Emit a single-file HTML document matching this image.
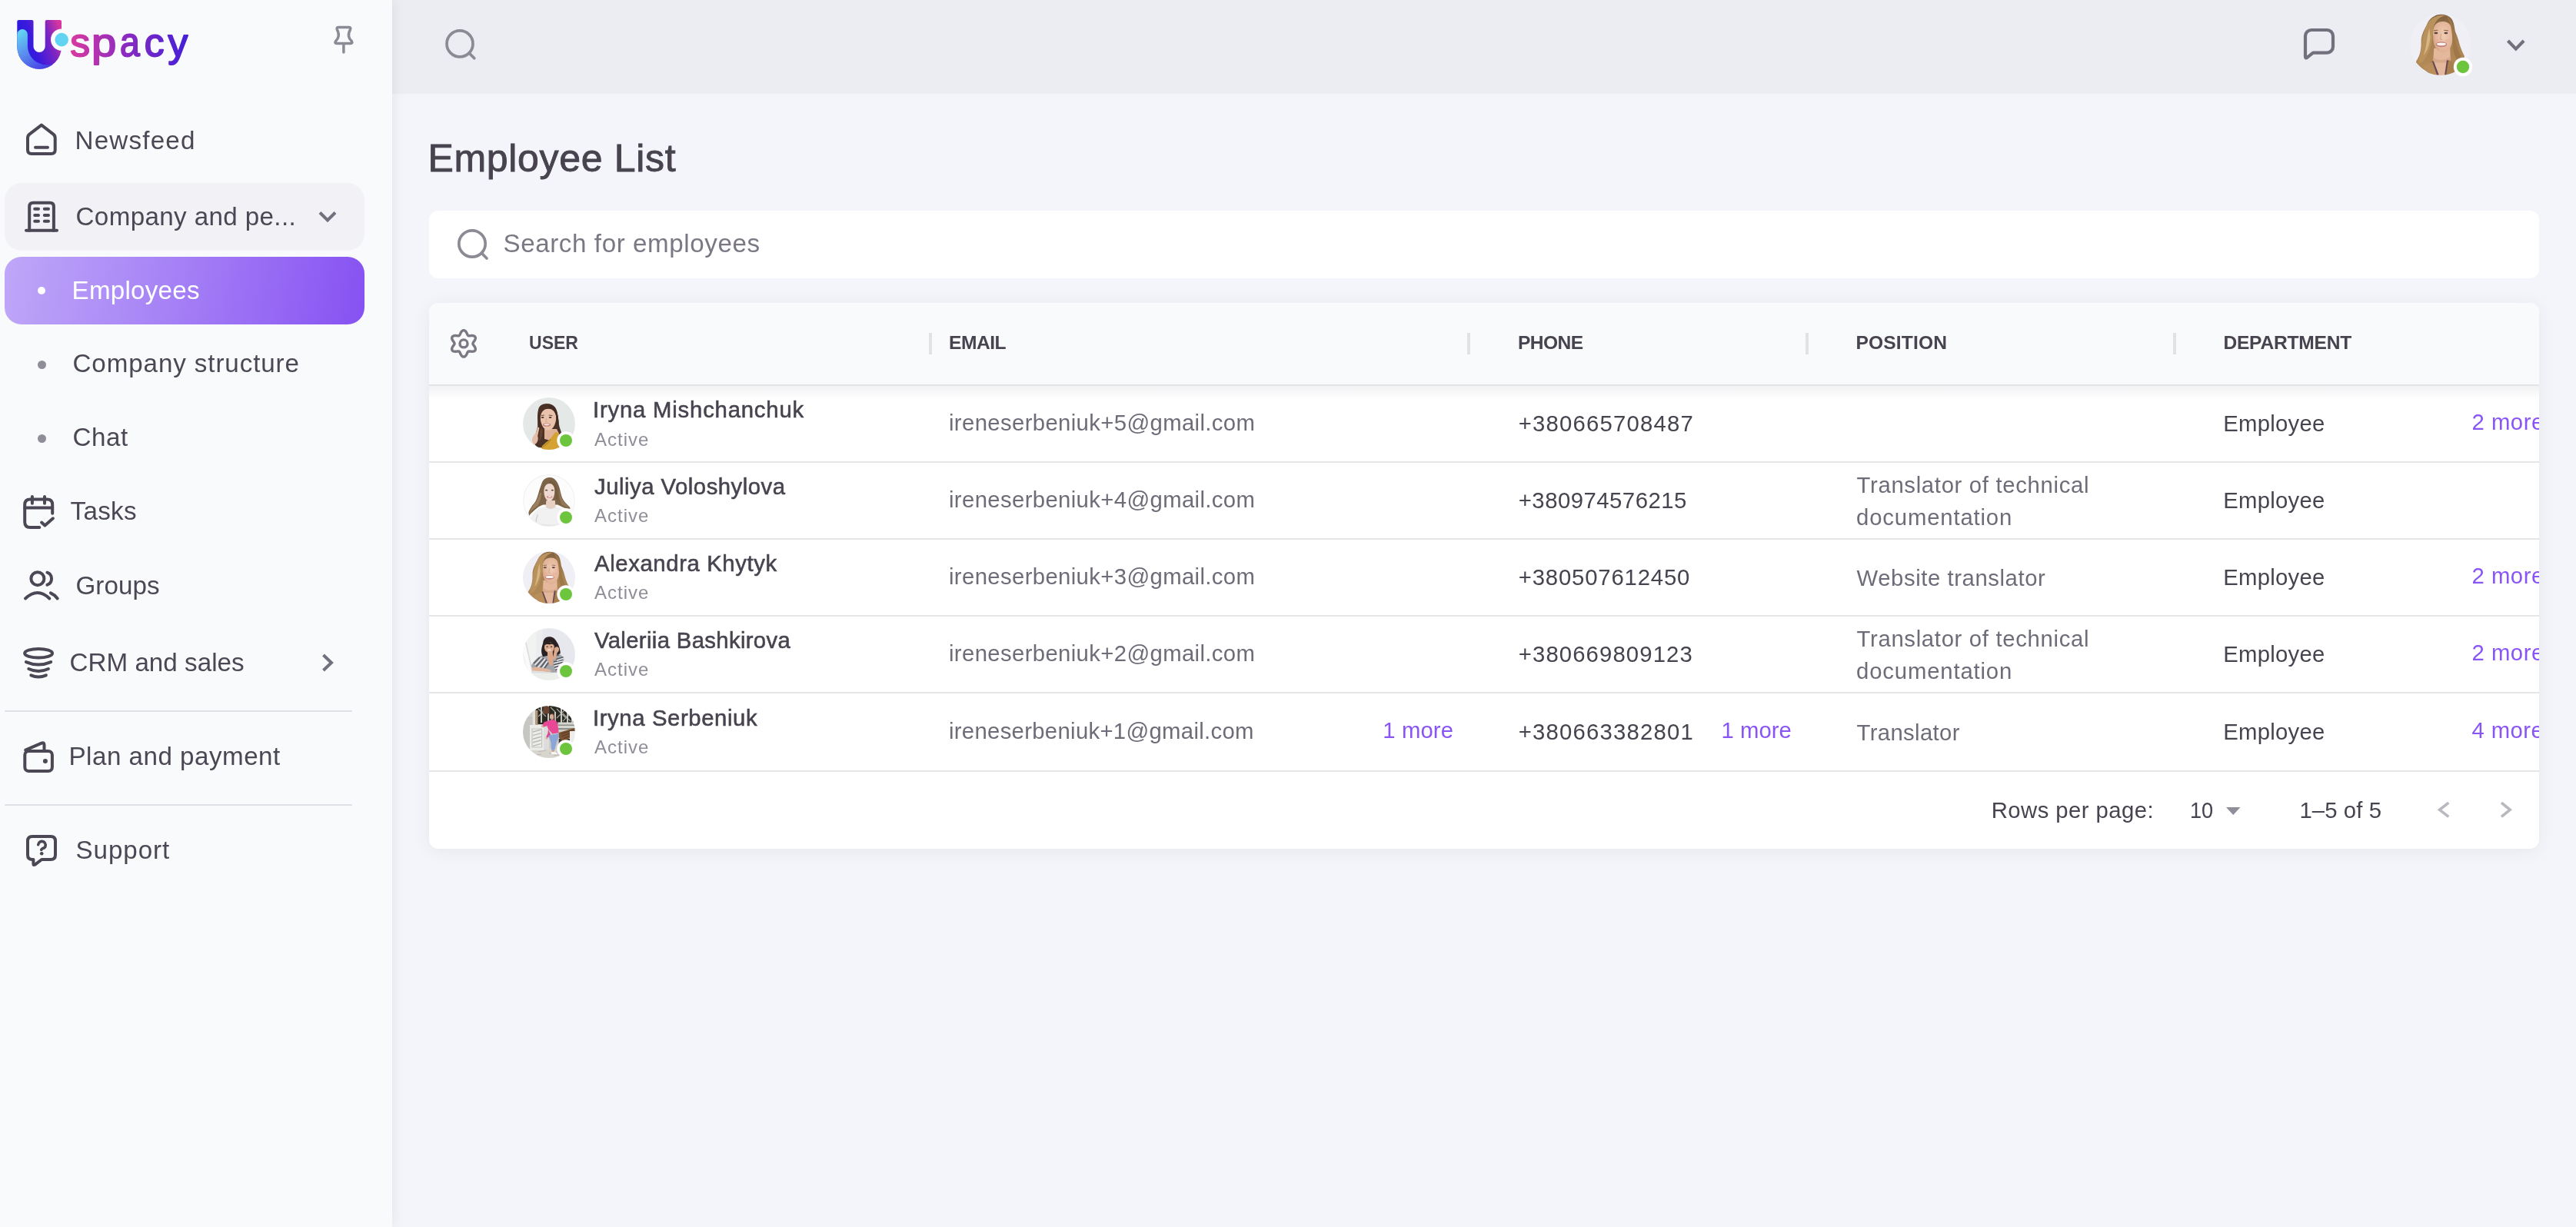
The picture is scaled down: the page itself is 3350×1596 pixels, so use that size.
<!DOCTYPE html><html><head><meta charset="utf-8"><title>Employee List</title><style>
html,body{margin:0;padding:0}
body{width:3350px;height:1596px;position:relative;overflow:hidden;background:#f4f5fa;font-family:"Liberation Sans",sans-serif}
.a{position:absolute}
.t{position:absolute;white-space:pre;line-height:1}
#pg{position:absolute;left:0;top:0;width:3350px;height:1596px;will-change:transform;transform:translateZ(0)}
#side{left:0;top:0;width:510px;height:1596px;background:#f9fafc;box-shadow:3px 0 14px rgba(70,70,100,.075)}
#top{left:510px;top:0;width:2840px;height:122px;background:#ecedf2}
#grp{left:6px;top:238px;width:468px;height:88px;border-radius:22px;background:#f1f1f6}
#pill{left:6px;top:334px;width:468px;height:88px;border-radius:22px;background:linear-gradient(100deg,#bfa7f8 0%,#a987f6 40%,#9668f4 75%,#8651f2 100%)}
.dot{width:11px;height:11px;border-radius:50%;background:#8f8d97}
.hr{left:6px;width:452px;height:2px;background:#e0e0e6}
#sbox{left:558px;top:274px;width:2744px;height:88px;border-radius:12px;background:#fff}
#card{left:558px;top:394px;width:2744px;height:710px;border-radius:12px;background:#fff;overflow:hidden;box-shadow:0 3px 22px rgba(50,50,90,.07)}
#head{left:0;top:0;width:2744px;height:106px;background:#f9fafc}
#hline{left:0;top:106px;width:2744px;height:2px;background:#e4e4e6}
#hsh{left:0;top:108px;width:2744px;height:18px;background:linear-gradient(#f2f2f4,#fff)}
.rl{left:0;width:2744px;height:2px;background:#e6e6e9}
.cs{top:39px;width:4px;height:28px;background:#e1e1e6}
#clip{left:0;top:0;width:3302px;height:1596px;overflow:hidden}
</style></head><body><div id="pg">
<div class="a" id="top"></div>
<div class="a" id="sbox"></div>
<div class="a" id="card"><div class="a" id="head"></div><div class="a" id="hsh"></div><div class="a" id="hline"></div><div class="a rl" style="top:206px"></div><div class="a rl" style="top:306px"></div><div class="a rl" style="top:406px"></div><div class="a rl" style="top:506px"></div><div class="a rl" style="top:608px"></div><div class="a cs" style="left:650px"></div><div class="a cs" style="left:1350px"></div><div class="a cs" style="left:1790px"></div><div class="a cs" style="left:2268px"></div></div>
<div class="a" id="side"></div>
<div class="a" id="grp"></div><div class="a" id="pill"></div>
<div class="a dot" style="left:49px;top:373px;width:10px;height:10px;background:#fff"></div>
<div class="a dot" style="left:48.5px;top:468.5px"></div><div class="a dot" style="left:48.5px;top:564.5px"></div>
<div class="a hr" style="top:924px"></div><div class="a hr" style="top:1046px"></div>
<svg class="a" style="left:0;top:0" width="3350" height="1596" viewBox="0 0 3350 1596">

<defs>
<linearGradient id="lgU" x1="22" y1="60" x2="80" y2="40" gradientUnits="userSpaceOnUse"><stop offset="0" stop-color="#2418e4"/><stop offset=".35" stop-color="#3a1bdc"/><stop offset=".7" stop-color="#7a24c4"/><stop offset="1" stop-color="#d8369e"/></linearGradient>
<linearGradient id="lgR" x1="28" y1="40" x2="62" y2="90" gradientUnits="userSpaceOnUse"><stop offset="0" stop-color="#62d4f2"/><stop offset=".45" stop-color="#5b8cee"/><stop offset="1" stop-color="#4338e6"/></linearGradient>
<linearGradient id="lgT" x1="92" y1="0" x2="246" y2="0" gradientUnits="userSpaceOnUse"><stop offset="0" stop-color="#d93aa0"/><stop offset=".45" stop-color="#8c2bc0"/><stop offset="1" stop-color="#431fd8"/></linearGradient>
<linearGradient id="lgP"><stop offset="0" stop-color="#b934ad"/><stop offset="1" stop-color="#982dbb"/></linearGradient><linearGradient id="lgA"><stop offset="0" stop-color="#912cbe"/><stop offset="1" stop-color="#7a28c6"/></linearGradient>
<clipPath id="cpU"><path d="M22.3,28 Q22.3,26 24.3,26 H41.5 Q43.5,26 43.5,28 V60.4 A7.6,7.6 0 0 0 58.7,60.4 V28 Q58.7,26 60.7,26 H78 Q80,26 80,28 V60.85 A28.85,28.85 0 0 1 22.3,60.85 Z"/></clipPath>
</defs>
<g clip-path="url(#cpU)">
<rect x="20" y="24" width="62" height="68" fill="url(#lgU)"/>
<path d="M22.3,44.8 A6.8,6.8 0 0 1 35.9,44.8 V59.5 A25.2,25.2 0 0 0 75,80.4 L80,95 H15 V44.8 Z" fill="url(#lgR)"/>
</g>
<circle cx="80.2" cy="51.6" r="14.2" fill="#f9fafc"/>
<circle cx="80.2" cy="51.6" r="8.8" fill="#60d4f1"/>
<g font-family="Liberation Sans" font-weight="400" font-size="51.5" fill="url(#lgT)" stroke="url(#lgT)" stroke-width="1.9" stroke-linejoin="round"><text x="91.2" y="73.2">s</text><text transform="translate(118.95,73.2) scale(1.127,1)" fill="url(#lgP)" stroke="url(#lgP)">p</text><text transform="translate(156.1,73.2) scale(0.9,1)" fill="url(#lgA)" stroke="url(#lgA)">a</text><text x="187.8" y="73.2">c</text><text x="218.6" y="73.2">y</text></g>

<g fill="none" stroke="#4b4754" stroke-width="4" stroke-linecap="round" stroke-linejoin="round"><path d="M53.9,162.6 L38.3,174.6 Q36,176.4 36,179.4 V194.9 Q36,199.9 41,199.9 H66.7 Q71.7,199.9 71.7,194.9 V179.4 Q71.7,176.4 69.4,174.6 Z"/><path d="M46,191.8 H62"/><path d="M38.2,299.8 V268.8 Q38.2,263.8 43.2,263.8 H64.9 Q69.9,263.8 69.9,268.8 V299.8"/><path d="M34,299.8 H74"/><path d="M45.2,271.8 H50 M57.8,271.8 H63"/><path d="M45.2,279.9 H50 M57.8,279.9 H63"/><path d="M45.2,287.7 H50 M57.8,287.7 H63"/><path d="M51.3,686 H39.2 Q32.2,686 32.2,679 V656.6 Q32.2,649.6 39.2,649.6 H61.2 Q68.2,649.6 68.2,656.6 V667.8"/><path d="M32.2,660.6 H68.2 M41.9,646 V654.8 M58,646 V654.8 M54.1,679.5 L58.4,683.4 L68.9,674.3"/><circle cx="48.9" cy="752.7" r="8.5"/><path d="M61.4,744.7 A8.5,8.5 0 0 1 61.4,760.7 M33,778.5 Q48.9,763.5 64.3,778.5 M65.9,771.4 Q71,773.6 74.7,778.5"/><ellipse cx="50.1" cy="849.8" rx="18" ry="5.8"/><path d="M33.9,861.1 Q50,868 66.2,861.1 M37.3,870 Q50,876 62.9,870 M40.3,878.4 Q50,882.6 59.9,878.4"/><rect x="32.3" y="977" width="35.6" height="26" rx="5"/><path d="M33.2,975.6 L54,966.6 Q57.5,965.2 57.5,969 V977"/><path d="M43.4,1118 H42 Q36,1118 36,1112 V1094 Q36,1088 42,1088 H66 Q72,1088 72,1094 V1112 Q72,1118 66,1118 H54.2 L45.6,1124.6 Q43.4,1126 43.4,1123.4 Z"/></g><circle cx="58.9" cy="990" r="3" fill="#4b4754"/><path d="M49.7,1098.6 A4.8,4.8 0 1 1 57.6,1102.8 Q54.2,1104 53.7,1105.4" fill="none" stroke="#4b4754" stroke-width="3.6" stroke-linecap="round"/><circle cx="54.2" cy="1110.3" r="2.3" fill="#4b4754"/><g fill="none" stroke="#73707d" stroke-width="4" stroke-linecap="butt" stroke-linejoin="miter"><path d="M416,276.5 L426,286.5 L436,276.5"/><path d="M420.5,852 L431,862 L420.5,872"/></g><path d="M440.5,35.5 H453.7 Q456.6,35.5 455.6,38.2 Q453,43 453.5,47 Q454,50.5 457.2,53.4 Q459,56.4 456,56.4 H437.8 Q434.8,56.4 436.6,53.4 Q439.6,50.5 440.2,47 Q440.8,43 438.3,38.2 Q437.4,35.5 440.5,35.5 Z M446.9,56.4 V68" fill="none" stroke="#8c8a94" stroke-width="3.5" stroke-linecap="round" stroke-linejoin="round"/>
<g fill="none" stroke="#8c8a94" stroke-width="3.7" stroke-linecap="round"><circle cx="598" cy="56.9" r="17"/><path d="M610.2,69.1 L616.8,75.7"/><circle cx="614" cy="317" r="17.2"/><path d="M626.3,329.3 L633,336"/></g><path d="M3008,68.7 L3000.6,74.6 Q2998,76.6 2998,73.4 V47 a8,8 0 0 1 8,-8 H3026 a8,8 0 0 1 8,8 V60.7 a8,8 0 0 1 -8,8 Z" fill="none" stroke="#73707d" stroke-width="4.2" stroke-linejoin="round"/><path d="M3261.5,53 L3271.8,63.6 L3282.1,53" fill="none" stroke="#73707d" stroke-width="4.2"/><path d="M614.90,446.90 L615.10,446.05 L615.67,445.12 L616.46,444.04 L617.31,442.80 L617.99,441.44 L618.33,440.07 L618.22,438.81 L617.62,437.76 L616.58,437.03 L615.22,436.65 L613.71,436.56 L612.21,436.67 L610.88,436.82 L609.78,436.84 L608.95,436.59 L608.32,435.99 L607.79,435.04 L607.25,433.81 L606.60,432.46 L605.77,431.19 L604.75,430.21 L603.60,429.67 L602.40,429.67 L601.25,430.21 L600.23,431.19 L599.40,432.46 L598.75,433.81 L598.21,435.04 L597.68,435.99 L597.05,436.59 L596.22,436.84 L595.12,436.82 L593.79,436.67 L592.29,436.56 L590.78,436.65 L589.42,437.03 L588.38,437.76 L587.78,438.81 L587.67,440.07 L588.01,441.44 L588.69,442.80 L589.54,444.04 L590.33,445.12 L590.90,446.05 L591.10,446.90 L590.90,447.75 L590.33,448.68 L589.54,449.76 L588.69,451.00 L588.01,452.36 L587.67,453.73 L587.78,454.99 L588.38,456.04 L589.42,456.77 L590.78,457.15 L592.29,457.24 L593.79,457.13 L595.12,456.98 L596.22,456.96 L597.05,457.21 L597.68,457.81 L598.21,458.76 L598.75,459.99 L599.40,461.34 L600.23,462.61 L601.25,463.59 L602.40,464.13 L603.60,464.13 L604.75,463.59 L605.77,462.61 L606.60,461.34 L607.25,459.99 L607.79,458.76 L608.32,457.81 L608.95,457.21 L609.78,456.96 L610.88,456.98 L612.21,457.13 L613.71,457.24 L615.22,457.15 L616.58,456.77 L617.62,456.04 L618.22,454.99 L618.33,453.73 L617.99,452.36 L617.31,451.00 L616.46,449.76 L615.67,448.68 L615.10,447.75Z" fill="none" stroke="#7b7884" stroke-width="3.4" stroke-linejoin="round"/><circle cx="603" cy="446.9" r="5" fill="none" stroke="#7b7884" stroke-width="3.4"/><path d="M2895,1050 H2913.5 L2904.25,1060 Z" fill="#8f8d97"/><g fill="none" stroke="#b9b8bf" stroke-width="3.6"><path d="M3184.3,1044.2 L3172.6,1053.3 L3184.3,1062.4"/><path d="M3253,1044.2 L3264.2,1053.3 L3253,1062.4"/></g>
<filter id="avb" x="-5%" y="-5%" width="110%" height="110%"><feGaussianBlur stdDeviation="0.5"/></filter><clipPath id="avc1"><circle cx="34" cy="34" r="34"/></clipPath><g transform="translate(680,517) scale(1.0000)"><g clip-path="url(#avc1)"><g filter="url(#avb)">
<rect width="68" height="68" fill="#e4e9e8"/>
<path d="M30.9,7.9 C24,8 20.5,12 20,16.1 C19,20 19,24 19,26.4 C19.3,31 19.6,34 19.3,36.6 C18.6,41 17.4,44 16.6,46.9 C15.5,51 14.6,54 14.5,57.2 C15,61 17,63.5 19.3,64.7 L30,66 L36,52 L50.1,46.9 C49.8,45.6 49.6,44.6 49.4,43.5 C48,40 47,36 46.7,33.2 C46.4,29 46,26 45.3,22.9 C44.6,18 43.6,15 41.9,12.7 C39.5,9.4 35.5,7.8 30.9,7.9 Z" fill="#4c3026"/>
<path d="M23,40 C22,46 21,52 21.5,58 C24,54 26,48 26,42 Z" fill="#65432f"/>
<path d="M28,41 L44,41 L47,47 L36,56 L28,54 Z" fill="#dfb196"/>
<path d="M22.8,27 C22.6,19.5 26.5,14.7 33,14.7 C39.5,14.7 43.4,19.5 43.2,27 C43,35 38.5,42.8 33,42.8 C27.5,42.8 23,35 22.8,27 Z" fill="#e9c2ab"/>
<path d="M33.2,14 C29,14 24.5,17 22.8,24 C22,28 22.6,32 22,36 L19.4,36 C19.6,28 19.4,22 21.5,16.5 C24,11.5 29,9.6 33.2,11 Z" fill="#4c3026"/>
<path d="M33.2,14 C37,14 41,17 43,23 C43.6,27 43.4,31 44.2,35 L46.6,33.2 C46,26 45.4,20 43,15.5 C40.5,11.5 36.5,9.8 33.2,11 Z" fill="#432a21"/>
<path d="M42.6,44.8 L46.7,46.9 C48,52 47.8,58 47.4,64.7 L40,68 L24.8,68 L24.8,63.3 C28,60 32,57 35.7,53.7 C38,50.6 40.4,47.6 42.6,44.8 Z" fill="#d4a233"/>
<path d="M35.7,53.7 C33,57 29,61 24.8,64.5 L24.8,66 C30,63 34,59 37,54.5 Z" fill="#b98a25"/>
<path d="M19.4,38.4 C20.6,38.3 21.4,39.2 21.2,40.6 L19.2,50 C19.8,52 20,54 19.4,56 C18.6,59 16.6,61 14,61.2 C12,58 11.6,55 12.4,52.6 C13.4,50 15.4,48 16.8,46 Z" fill="#e5bda8"/>
<ellipse cx="31" cy="35.6" rx="5" ry="2.2" fill="#c27a72"/><ellipse cx="31" cy="35.3" rx="3.6" ry="1.1" fill="#f6ebe6"/>
<ellipse cx="25.6" cy="26" rx="1.9" ry="1" fill="#4a3329"/><ellipse cx="35.6" cy="26" rx="1.9" ry="1" fill="#4a3329"/>
<path d="M23.6,23.6 L27.8,23 M33.6,23 L38.4,23.6" stroke="#5b3d30" stroke-width=".9" fill="none"/>
<path d="M30.6,27 L29.8,31.4 L31.6,31.6" stroke="#d4a48c" stroke-width=".9" fill="none"/>
</g></g></g><circle cx="736.0" cy="573.0" r="11.7" fill="#fff"/><circle cx="736.0" cy="573.0" r="8" fill="#6cc53c"/><clipPath id="avc2"><circle cx="34" cy="34" r="34"/></clipPath><g transform="translate(680,617) scale(1.0000)"><g clip-path="url(#avc2)"><g filter="url(#avb)">
<rect width="68" height="68" fill="#fcfcfc"/>
<path d="M34.4,4.1 C29,4.2 25.6,8 24.1,12.7 C22.6,17 21.4,20 20.7,22.9 C19.6,27 18.6,30 17.3,33.2 C15.8,36.4 14.2,38.4 12.5,40 C10.6,43 9,45.6 7.7,48.3 C7.2,50.4 7.6,52.4 8.4,53.7 C9.6,51.6 11,50.2 12.5,49 C15.4,46.4 18,44.2 20.7,42.1 L26.2,39.4 L45.3,39.4 C48,40.6 50.6,42 53.5,43.5 C56.4,44.4 59.2,44.8 61.8,44.8 C61.4,43.6 61,42.8 60.4,42.1 C58.4,40.2 56.6,38.4 54.9,36.6 C53.2,34.4 51.8,32 50.8,29.8 C49.8,26.4 48.8,23 48.1,19.5 C47.2,15.6 45.8,12 43.9,9.2 C41.6,5.8 38.4,4 34.4,4.1 Z" fill="#7d6446"/>
<path d="M22,24 C20.6,30 17.6,36 13,41 C11,44 9.4,47 8.6,50.6 C11.4,46.6 15.4,43.6 19.6,40.4 C22.4,35.6 23.6,30 24.4,24 Z" fill="#9a8060"/>
<path d="M47.4,22 C48.4,28 51,33.6 55,37.6 C56.8,39.6 58.6,41.4 60.2,43 C56.6,42.6 53.4,41.4 50.4,39.4 C48.4,34 47.2,28 46.4,22 Z" fill="#927858"/>
<path d="M15.2,49 C19,45.4 24,43 30.3,42.1 L41.9,42.1 C46,42.6 49.6,43.6 52.2,44.8 C57,48 60,54 62,68 L6,68 C8,60 11,53.6 15.2,49 Z" fill="#f1f1f1"/>
<path d="M30.3,34 L41.9,34 L42.4,42.4 C39,45 33.4,45 29.8,42.4 Z" fill="#e8cfc3"/>
<path d="M30,42.2 C33.6,45.2 38.6,45.2 42.2,42.2" stroke="#d6d6d6" stroke-width="1" fill="none"/>
<path d="M27.4,23 C27.2,16 30,12 34.5,12 C39,12 41.6,16 41.3,23 C41,29.6 38.4,34.7 34.5,34.7 C30.6,34.7 27.6,29.6 27.4,23 Z" fill="#efd9cf"/>
<path d="M34.6,11.2 C30,11.2 27.4,15 26.8,21 C26.4,25 26.6,29 25.6,33 L23,33 C24,27 24.4,21 25.6,15.6 C27.4,9.8 31,7.6 34.6,8 Z" fill="#7d6446"/>
<path d="M34.6,11.2 C39,11.2 41.4,15 41.8,21 C42,25 42,29 43.4,33 L46.4,33 C45.2,27 44.6,21 43.4,15.6 C41.6,9.8 38,7.6 34.6,8 Z" fill="#745c40"/>
<path d="M19.3,52.4 C17.6,56 17,60 17.3,63.3" stroke="#cfcfcf" stroke-width="1.3" fill="none"/>
<path d="M22,65.4 C32,67.4 42,67.2 50,64.8" stroke="#e0e0e0" stroke-width="2.2" fill="none"/>
<ellipse cx="34.7" cy="29.2" rx="3.6" ry="1.5" fill="#d08a86"/><ellipse cx="34.9" cy="29" rx="2.4" ry=".8" fill="#fff"/>
<ellipse cx="30.6" cy="20.6" rx="1.7" ry=".9" fill="#5a4a44"/><ellipse cx="38.4" cy="20.6" rx="1.7" ry=".9" fill="#5a4a44"/>
<circle cx="34" cy="34" r="33.4" fill="none" stroke="#f0f0f0" stroke-width="1.2"/>
</g></g></g><circle cx="736.0" cy="673.0" r="11.7" fill="#fff"/><circle cx="736.0" cy="673.0" r="8" fill="#6cc53c"/><clipPath id="avc3"><circle cx="34" cy="34" r="34"/></clipPath><g transform="translate(680,717) scale(1.0000)"><g clip-path="url(#avc3)"><g filter="url(#avb)">
<defs><linearGradient id="h3_3" x1="0" y1="0" x2="0" y2="1"><stop offset="0" stop-color="#7f6040"/><stop offset=".45" stop-color="#a98252"/><stop offset="1" stop-color="#b48c58"/></linearGradient>
<radialGradient id="f3_3" cx=".55" cy=".45" r=".6"><stop offset="0" stop-color="#f0cbb4"/><stop offset="1" stop-color="#dfae90"/></radialGradient></defs>
<rect width="68" height="68" fill="#efeff5"/>
<path d="M34.6,0.7 C27,0.5 21,6 18.7,12.1 C15,19 12.5,24 12.5,30 C12.5,38 12,44 8.3,50.2 C7,52 6.5,53 6.9,53.7 C12,60 20,66 30,68 L52,68 C53,64 52,62 51.3,60.6 C56,58 60,52 60.3,46.8 C58,42 56,38 54.7,32.9 C53,26 51,22 49.9,19 C49,12 48,8 45.7,5.2 C43,2 39,0.7 34.6,0.7 Z" fill="url(#h3_3)"/>
<path d="M26.6,38 L44.4,38 L45,54 L41.6,52.3 L40.4,68 L29.6,68 L25.6,53.7 Z" fill="#e4b89c"/>
<path d="M26,48 C30,52 40,52 44.6,47 L45,54 L26,54 Z" fill="#d9a98c"/>
<path d="M24.6,52.6 L30.4,68 M42.4,51.4 L40,68" stroke="#6a4954" stroke-width="3.4" fill="none"/>
<path d="M14,58 C18,56 22,54 24.6,52.6 L30,68 L22,68 Z" fill="#b98e5a"/>
<path d="M42.6,51.2 C46,52 50,55 51.3,60.6 L52,68 L40,68 Z" fill="#a9804e"/>
<path d="M25.6,22 C25.3,12 30,8.5 36.5,8.5 C43,8.5 47.3,13 47,22 C47.4,30 46.6,36.4 42,40.8 C38.6,43.6 34.6,43.6 31.4,40.8 C26.6,36.4 25.4,30 25.6,22 Z" fill="url(#f3_3)"/>
<path d="M40,2 C32,3 26.4,9 25.6,19 C25,28 24,36 20,44 C17,50 14,54 10,55 C9,50 12,44 13,38 C13,28 15,18 20,10 C24,4 32,0 40,2 Z" fill="#b9915c"/>
<path d="M21.6,16 C18,26 19,36 15,46 C19,42 22,34 22.6,26 Z" fill="#d6b680"/>
<path d="M40,2 C45,5 48,10 48,20 C49,28 52,36 55,44 C57,48 58,52 56,56 C52,52 49,46 47.5,38 C47,30 47,24 46,18 C45,12 43,6 40,2 Z" fill="#9e7848"/>
<path d="M26.4,24 C26.6,31 28.4,36.6 31.6,40.4" stroke="#d4a283" stroke-width="1.8" fill="none" opacity=".6"/><ellipse cx="29.4" cy="29.6" rx="2.6" ry="1.8" fill="#e8a998" opacity=".45"/><ellipse cx="41.4" cy="29.6" rx="2.6" ry="1.8" fill="#e8a998" opacity=".45"/>
<ellipse cx="34.8" cy="33.8" rx="6.2" ry="2.9" fill="#c4807a"/><ellipse cx="34.8" cy="33.4" rx="5.2" ry="1.6" fill="#faf3ef"/>
<ellipse cx="28.8" cy="21.3" rx="2.1" ry="1.05" fill="#57463f"/><ellipse cx="39.8" cy="21.3" rx="2.1" ry="1.05" fill="#57463f"/>
<path d="M26.4,18.6 L31,18 M37.6,18 L42.4,18.6" stroke="#8a6a4c" stroke-width=".9" fill="none"/>
<path d="M34.6,22 L33.6,28 L35.8,28.4" stroke="#d2a286" stroke-width=".9" fill="none"/>
</g></g></g><circle cx="736.0" cy="773.0" r="11.7" fill="#fff"/><circle cx="736.0" cy="773.0" r="8" fill="#6cc53c"/><clipPath id="avc4"><circle cx="34" cy="34" r="34"/></clipPath><g transform="translate(680,817) scale(1.0000)"><g clip-path="url(#avc4)"><g filter="url(#avb)">
<rect width="68" height="68" fill="#e6e8ee"/>
<path d="M0,0 H19 L17.3,58 H0 Z" fill="#f1f3f1"/>
<path d="M17.3,0 H26 L24,40 L17.3,58 Z" fill="#ecedf0"/>
<path d="M2.9,18.1 L11.8,57.8 L8,60 L0,30 Z" fill="#fafafa"/>
<path d="M2.9,18.1 L4.4,17.6 L13.2,57 L11.8,57.8 Z" fill="#d8dcdc"/>
<path d="M0,58.5 H68 V68 H0 Z" fill="#eceeea"/>
<path d="M23.4,35.9 C19,38 14,43 11.1,48.3 L11.8,52.4 L35.7,57.8 L45.3,57.8 C49,52 52,46 53.5,40 C52.4,37.6 50.6,35.8 48.7,34.6 L36,33 Z" fill="#a3a5ac"/>
<path d="M14,46 L22,38 M17,50 L27,39 M22,52.6 L31,41 M27,54 L33,45 M40,44 L52,41 M40,47.6 L51.6,44.6 M41,51 L50,48.4 M42,54.4 L48.4,52.4 M43,40.6 L52.6,37.6 M38,37 L47,34.8" stroke="#55565e" stroke-width="1.5" fill="none"/>
<path d="M15.6,48 L24.6,38.4 M19.6,51.4 L29,40 M24.6,53.4 L32,43 M40,45.8 L52,42.8 M40.6,49.4 L50.8,46.6 M41.6,52.8 L49.2,50.4 M44,42.4 L52.8,39.4" stroke="#eef0f2" stroke-width="1.3" fill="none"/>
<path d="M34.4,11.3 C29,11 26.6,15 26.2,19.5 C25,23 24,27 24.1,30.5 C24.4,33.6 25.2,35.8 26.2,37.3 L31,36 L40,36 L48.7,33.2 C48.8,31.2 48.6,29.4 48.1,27.7 C47.4,24 46,20.8 44,18.1 C42,13.6 38.6,11.2 34.4,11.3 Z" fill="#2c2223"/>
<path d="M32,30 L38.8,30 L39.4,46.9 L35.6,50 L32,40 Z" fill="#dba88a"/>
<path d="M28,25 C28,20.6 30.6,18 34.4,18 C38.2,18 40.8,20.6 40.8,25 C40.8,29 38,32 34.4,32 C30.8,32 28,29 28,25 Z" fill="#dfae92"/>
<path d="M27.6,22.6 C29,18 33,16.6 36,18.6 C38.6,17.6 41,19.6 41.4,23 C39,20.6 36.6,20.4 34.6,21.4 C32,20.6 29.6,21 27.6,22.6 Z" fill="#2c2223"/>
<path d="M41.6,25.4 C43.4,23.6 46.4,24.2 47,26.8 C47.4,29 46.4,31 44.6,32 L42.6,41 L38.6,40 L40.6,31 C40.4,28.6 40.6,26.6 41.6,25.4 Z" fill="#dba88a"/>
<path d="M11.8,51.4 C18,50 26,51.4 36.4,54.4 L36.4,57 L11.8,55.4 Z" fill="#e0b59b"/>
<path d="M11.8,56.2 L35.7,57 L35.7,58.6 L11.8,58 Z" fill="#d9dedd"/>
<ellipse cx="34.2" cy="28.4" rx="2.3" ry=".9" fill="#f6ece8"/>
<ellipse cx="31.6" cy="24.2" rx="1.2" ry=".7" fill="#3a2a28"/><ellipse cx="37" cy="24.2" rx="1.2" ry=".7" fill="#3a2a28"/>
</g></g></g><circle cx="736.0" cy="873.0" r="11.7" fill="#fff"/><circle cx="736.0" cy="873.0" r="8" fill="#6cc53c"/><clipPath id="avc5"><circle cx="34" cy="34" r="34"/></clipPath><g transform="translate(680,918) scale(1.0000)"><g clip-path="url(#avc5)"><g filter="url(#avb)">
<rect width="68" height="68" fill="#cfcfcb"/>
<path d="M14,0 H68 V24 H14 Z" fill="#2b2c24"/>
<path d="M24,0 V22 M33,0 V22 M42,8 V22 M50,0 V22 M58,4 V22 M64,8 V22" stroke="#d9d9d4" stroke-width="1.8" fill="none"/>
<path d="M20,4 L30,14 M30,4 L20,14 M44,4 L56,16 M56,4 L44,16 M52,10 L62,20 M62,10 L52,20 M36,2 L42,8 M42,14 L36,20" stroke="#c9c9c2" stroke-width="1.1" fill="none" opacity=".8"/>
<path d="M26.6,1 H34 L34.6,9 C33,11.4 28,11.4 26.4,9 Z" fill="#6a4232"/>
<path d="M12.5,4 H16.6 V30 H12.5 Z" fill="#e6e3dd"/>
<path d="M16.6,6 H19.4 V28 H16.6 Z" fill="#b49878"/>
<path d="M0,14 H12.5 V56 H0 Z" fill="#c6c6c3"/>
<path d="M45.3,21.6 H68 V24.6 H45.3 Z M45.3,26 H68 V29 H45.3 Z" fill="#d6d6d1"/>
<path d="M45.3,24.6 H68 V26 H45.3 Z M45.3,29 H68 V31 H45.3 Z" fill="#8e8e88"/>
<path d="M46.7,43 H61 V52 H46.7 Z" fill="#3b3631"/>
<path d="M46.7,35 L67.6,28.8 L68,38.6 L52,46.4 L46.7,41.4 Z" fill="#7b5333"/>
<path d="M50,36.4 L66,31.4 M51,39.6 L67,34 M53,42.6 L67.4,36.8" stroke="#563820" stroke-width="1" fill="none"/>
<path d="M61,33 H68 V50 H61 Z" fill="#ededeb"/>
<path d="M0,56 H68 V68 H0 Z" fill="#d8d5cf"/>
<path d="M20,60 L30,58 M34,62 L46,60 M14,64 L24,63 M40,65 L52,63" stroke="#bdb9b2" stroke-width="1.2" fill="none"/>
<path d="M9,25 H27.5 V57.8 H9 Z" fill="#ececea"/>
<path d="M12,30 H24.6 V54 H12 Z" fill="none" stroke="#c4c4c0" stroke-width="1.2"/>
<path d="M13,34 L23.6,31 M13,38.6 L23.6,35.6 M13,43.2 L23.6,40.2 M13,47.8 L23.6,44.8 M13,52.4 L23.6,49.4" stroke="#b9b9b5" stroke-width="1.5" fill="none"/>
<path d="M27.5,27.7 H34.4 V56.5 H27.5 Z" fill="#dddddb"/>
<path d="M34.4,36 H40 V56 H34.4 Z" fill="#c9c9c6"/>
<path d="M35.4,12 C35.6,9.4 40.6,9.2 41,12.4 L42,22 L40,22 L39.6,16 L36,16 Z" fill="#6c4b3a"/>
<ellipse cx="37.4" cy="14.4" rx="2.5" ry="3.3" fill="#d8ad98"/>
<path d="M24.8,26.4 L27.5,21.6 L34.4,18.8 C37,17.8 40.6,18.2 42.6,19.5 C44.4,20.8 45,22.4 45.3,24.3 L46.7,35.3 L38.5,36.6 L33,30.5 L31.4,26 L26,28 Z" fill="#e84a97"/>
<path d="M33,30.5 L36,38 L32,42 L30,41 L32.4,36 Z" fill="#e04290"/>
<circle cx="25.4" cy="26.6" r="1.6" fill="#dcae98"/><circle cx="31" cy="42" r="1.5" fill="#dcae98"/>
<path d="M33,38.7 L46.7,35.9 C47,40 45.6,44 44,46.9 L41.2,57.8 L37.1,57.8 L36.4,46.9 Z" fill="#8ba6d6"/>
<path d="M37.6,57.8 H41 L40.6,61 H38 Z" fill="#caa08c"/>
<path d="M37,60.4 C39,59.4 42.6,59.6 44.6,61.4 L44.6,63 L37,63 Z" fill="#f6f6f3"/>
</g></g></g><circle cx="736.0" cy="974.0" r="11.7" fill="#fff"/><circle cx="736.0" cy="974.0" r="8" fill="#6cc53c"/><clipPath id="avc6"><circle cx="34" cy="34" r="34"/></clipPath><g transform="translate(3134,18) scale(1.1765)"><g clip-path="url(#avc6)"><g filter="url(#avb)">
<defs><linearGradient id="h3_6" x1="0" y1="0" x2="0" y2="1"><stop offset="0" stop-color="#7f6040"/><stop offset=".45" stop-color="#a98252"/><stop offset="1" stop-color="#b48c58"/></linearGradient>
<radialGradient id="f3_6" cx=".55" cy=".45" r=".6"><stop offset="0" stop-color="#f0cbb4"/><stop offset="1" stop-color="#dfae90"/></radialGradient></defs>
<rect width="68" height="68" fill="#efeff5"/>
<path d="M34.6,0.7 C27,0.5 21,6 18.7,12.1 C15,19 12.5,24 12.5,30 C12.5,38 12,44 8.3,50.2 C7,52 6.5,53 6.9,53.7 C12,60 20,66 30,68 L52,68 C53,64 52,62 51.3,60.6 C56,58 60,52 60.3,46.8 C58,42 56,38 54.7,32.9 C53,26 51,22 49.9,19 C49,12 48,8 45.7,5.2 C43,2 39,0.7 34.6,0.7 Z" fill="url(#h3_6)"/>
<path d="M26.6,38 L44.4,38 L45,54 L41.6,52.3 L40.4,68 L29.6,68 L25.6,53.7 Z" fill="#e4b89c"/>
<path d="M26,48 C30,52 40,52 44.6,47 L45,54 L26,54 Z" fill="#d9a98c"/>
<path d="M24.6,52.6 L30.4,68 M42.4,51.4 L40,68" stroke="#6a4954" stroke-width="3.4" fill="none"/>
<path d="M14,58 C18,56 22,54 24.6,52.6 L30,68 L22,68 Z" fill="#b98e5a"/>
<path d="M42.6,51.2 C46,52 50,55 51.3,60.6 L52,68 L40,68 Z" fill="#a9804e"/>
<path d="M25.6,22 C25.3,12 30,8.5 36.5,8.5 C43,8.5 47.3,13 47,22 C47.4,30 46.6,36.4 42,40.8 C38.6,43.6 34.6,43.6 31.4,40.8 C26.6,36.4 25.4,30 25.6,22 Z" fill="url(#f3_6)"/>
<path d="M40,2 C32,3 26.4,9 25.6,19 C25,28 24,36 20,44 C17,50 14,54 10,55 C9,50 12,44 13,38 C13,28 15,18 20,10 C24,4 32,0 40,2 Z" fill="#b9915c"/>
<path d="M21.6,16 C18,26 19,36 15,46 C19,42 22,34 22.6,26 Z" fill="#d6b680"/>
<path d="M40,2 C45,5 48,10 48,20 C49,28 52,36 55,44 C57,48 58,52 56,56 C52,52 49,46 47.5,38 C47,30 47,24 46,18 C45,12 43,6 40,2 Z" fill="#9e7848"/>
<path d="M26.4,24 C26.6,31 28.4,36.6 31.6,40.4" stroke="#d4a283" stroke-width="1.8" fill="none" opacity=".6"/><ellipse cx="29.4" cy="29.6" rx="2.6" ry="1.8" fill="#e8a998" opacity=".45"/><ellipse cx="41.4" cy="29.6" rx="2.6" ry="1.8" fill="#e8a998" opacity=".45"/>
<ellipse cx="34.8" cy="33.8" rx="6.2" ry="2.9" fill="#c4807a"/><ellipse cx="34.8" cy="33.4" rx="5.2" ry="1.6" fill="#faf3ef"/>
<ellipse cx="28.8" cy="21.3" rx="2.1" ry="1.05" fill="#57463f"/><ellipse cx="39.8" cy="21.3" rx="2.1" ry="1.05" fill="#57463f"/>
<path d="M26.4,18.6 L31,18 M37.6,18 L42.4,18.6" stroke="#8a6a4c" stroke-width=".9" fill="none"/>
<path d="M34.6,22 L33.6,28 L35.8,28.4" stroke="#d2a286" stroke-width=".9" fill="none"/>
</g></g></g><circle cx="3203.0" cy="87.0" r="12.2" fill="#fff"/><circle cx="3203.0" cy="87.0" r="8.2" fill="#6cc53c"/>
</svg>
<span class="t" style="left:97.50px;top:165.65px;font-size:33.2px;color:#4b4754;letter-spacing:1.197px;">Newsfeed</span>
<span class="t" style="left:98.50px;top:264.90px;font-size:33.2px;color:#4b4754;letter-spacing:0.362px;">Company and pe...</span>
<span class="t" style="left:93.50px;top:360.90px;font-size:33.2px;color:#ffffff;letter-spacing:0.240px;">Employees</span>
<span class="t" style="left:94.50px;top:456.40px;font-size:33.2px;color:#4b4754;letter-spacing:0.881px;">Company structure</span>
<span class="t" style="left:94.50px;top:552.40px;font-size:33.2px;color:#4b4754;letter-spacing:0.539px;">Chat</span>
<span class="t" style="left:91.50px;top:648.15px;font-size:33.2px;color:#4b4754;letter-spacing:0.316px;">Tasks</span>
<span class="t" style="left:98.50px;top:744.90px;font-size:33.2px;color:#4b4754;letter-spacing:0.052px;">Groups</span>
<span class="t" style="left:90.50px;top:844.90px;font-size:33.2px;color:#4b4754;letter-spacing:0.019px;">CRM and sales</span>
<span class="t" style="left:89.50px;top:967.40px;font-size:33.2px;color:#4b4754;letter-spacing:0.480px;">Plan and payment</span>
<span class="t" style="left:98.50px;top:1088.90px;font-size:33.2px;color:#4b4754;letter-spacing:0.914px;">Support</span>
<span class="t" style="left:556.50px;top:180.68px;font-size:50px;color:#47434f;letter-spacing:0.675px;-webkit-text-stroke:0.9px #47434f;">Employee List</span>
<span class="t" style="left:654.50px;top:299.90px;font-size:33.2px;color:#7b7884;letter-spacing:0.567px;">Search for employees</span>
<span class="t" style="left:687.56px;top:434.18px;font-size:24.6px;color:#47434f;letter-spacing:0.000px;font-weight:700;transform:scaleX(0.9361);transform-origin:0 0;">USER</span>
<span class="t" style="left:1234.00px;top:434.18px;font-size:24.6px;color:#47434f;letter-spacing:-0.496px;font-weight:700;">EMAIL</span>
<span class="t" style="left:1974.00px;top:434.18px;font-size:24.6px;color:#47434f;letter-spacing:-0.576px;font-weight:700;">PHONE</span>
<span class="t" style="left:2413.50px;top:434.18px;font-size:24.6px;color:#47434f;letter-spacing:0.142px;font-weight:700;">POSITION</span>
<span class="t" style="left:2891.40px;top:434.18px;font-size:24.6px;color:#47434f;letter-spacing:-0.227px;font-weight:700;">DEPARTMENT</span>
<span class="t" style="left:771.00px;top:517.70px;font-size:29.3px;color:#47434f;letter-spacing:0.801px;-webkit-text-stroke:0.55px #47434f;">Iryna Mishchanchuk</span>
<span class="t" style="left:773.00px;top:617.70px;font-size:29.3px;color:#47434f;letter-spacing:0.509px;-webkit-text-stroke:0.55px #47434f;">Juliya Voloshylova</span>
<span class="t" style="left:773.00px;top:718.20px;font-size:29.3px;color:#47434f;letter-spacing:0.611px;-webkit-text-stroke:0.55px #47434f;">Alexandra Khytyk</span>
<span class="t" style="left:773.00px;top:818.20px;font-size:29.3px;color:#47434f;letter-spacing:0.344px;-webkit-text-stroke:0.55px #47434f;">Valeriia Bashkirova</span>
<span class="t" style="left:771.00px;top:918.95px;font-size:29.3px;color:#47434f;letter-spacing:0.604px;-webkit-text-stroke:0.55px #47434f;">Iryna Serbeniuk</span>
<span class="t" style="left:773.00px;top:559.68px;font-size:24px;color:#8f8d97;letter-spacing:0.998px;">Active</span>
<span class="t" style="left:773.00px;top:659.38px;font-size:24px;color:#8f8d97;letter-spacing:0.998px;">Active</span>
<span class="t" style="left:773.00px;top:759.18px;font-size:24px;color:#8f8d97;letter-spacing:0.998px;">Active</span>
<span class="t" style="left:773.00px;top:859.18px;font-size:24px;color:#8f8d97;letter-spacing:0.998px;">Active</span>
<span class="t" style="left:773.00px;top:960.18px;font-size:24px;color:#8f8d97;letter-spacing:0.998px;">Active</span>
<span class="t" style="left:1234.00px;top:535.45px;font-size:29.3px;color:#6f6c79;letter-spacing:0.364px;">ireneserbeniuk+5@gmail.com</span>
<span class="t" style="left:1234.00px;top:635.45px;font-size:29.3px;color:#6f6c79;letter-spacing:0.364px;">ireneserbeniuk+4@gmail.com</span>
<span class="t" style="left:1234.00px;top:735.45px;font-size:29.3px;color:#6f6c79;letter-spacing:0.364px;">ireneserbeniuk+3@gmail.com</span>
<span class="t" style="left:1234.00px;top:835.45px;font-size:29.3px;color:#6f6c79;letter-spacing:0.364px;">ireneserbeniuk+2@gmail.com</span>
<span class="t" style="left:1234.00px;top:936.20px;font-size:29.3px;color:#6f6c79;letter-spacing:0.304px;">ireneserbeniuk+1@gmail.com</span>
<span class="t" style="left:1974.75px;top:536.45px;font-size:29.3px;color:#47434f;letter-spacing:1.201px;">+380665708487</span>
<span class="t" style="left:1974.75px;top:636.45px;font-size:29.3px;color:#47434f;letter-spacing:0.493px;">+380974576215</span>
<span class="t" style="left:1974.75px;top:736.45px;font-size:29.3px;color:#47434f;letter-spacing:0.826px;">+380507612450</span>
<span class="t" style="left:1974.75px;top:836.45px;font-size:29.3px;color:#47434f;letter-spacing:1.118px;">+380669809123</span>
<span class="t" style="left:1974.75px;top:937.20px;font-size:29.3px;color:#47434f;letter-spacing:1.201px;">+380663382801</span>
<span class="t" style="left:2414.50px;top:616.45px;font-size:29.3px;color:#6f6c79;letter-spacing:0.676px;">Translator of technical</span>
<span class="t" style="left:2414.00px;top:658.45px;font-size:29.3px;color:#6f6c79;letter-spacing:0.842px;">documentation</span>
<span class="t" style="left:2414.50px;top:737.20px;font-size:29.3px;color:#6f6c79;letter-spacing:0.570px;">Website translator</span>
<span class="t" style="left:2414.50px;top:816.45px;font-size:29.3px;color:#6f6c79;letter-spacing:0.676px;">Translator of technical</span>
<span class="t" style="left:2414.00px;top:858.45px;font-size:29.3px;color:#6f6c79;letter-spacing:0.842px;">documentation</span>
<span class="t" style="left:2414.50px;top:938.20px;font-size:29.3px;color:#6f6c79;letter-spacing:0.357px;">Translator</span>
<span class="t" style="left:2891.20px;top:536.45px;font-size:29.3px;color:#47434f;letter-spacing:0.260px;">Employee</span>
<span class="t" style="left:2891.20px;top:636.45px;font-size:29.3px;color:#47434f;letter-spacing:0.260px;">Employee</span>
<span class="t" style="left:2891.20px;top:736.45px;font-size:29.3px;color:#47434f;letter-spacing:0.260px;">Employee</span>
<span class="t" style="left:2891.20px;top:836.45px;font-size:29.3px;color:#47434f;letter-spacing:0.260px;">Employee</span>
<span class="t" style="left:2891.20px;top:937.20px;font-size:29.3px;color:#47434f;letter-spacing:0.260px;">Employee</span>
<span class="t" style="left:1798.30px;top:934.60px;font-size:29.3px;color:#8a55f5;letter-spacing:0.103px;">1 more</span>
<span class="t" style="left:2238.60px;top:934.60px;font-size:29.3px;color:#8a55f5;letter-spacing:0.003px;">1 more</span>
<span class="t" style="left:2589.70px;top:1038.50px;font-size:29.3px;color:#47434f;letter-spacing:0.450px;">Rows per page:</span>
<span class="t" style="left:2847.94px;top:1038.50px;font-size:29.3px;color:#47434f;letter-spacing:0.000px;transform:scaleX(0.9276);transform-origin:0 0;">10</span>
<span class="t" style="left:2990.40px;top:1038.50px;font-size:29.3px;color:#47434f;letter-spacing:0.101px;">1–5 of 5</span>
<div class="a" id="clip"><span class="t" style="left:3214.40px;top:533.80px;font-size:29.3px;color:#8a55f5;letter-spacing:0.543px;">2 more</span>
<span class="t" style="left:3214.40px;top:733.80px;font-size:29.3px;color:#8a55f5;letter-spacing:0.543px;">2 more</span>
<span class="t" style="left:3214.40px;top:833.80px;font-size:29.3px;color:#8a55f5;letter-spacing:0.543px;">2 more</span>
<span class="t" style="left:3214.50px;top:934.60px;font-size:29.3px;color:#8a55f5;letter-spacing:0.403px;">4 more</span></div>
</div></body></html>
